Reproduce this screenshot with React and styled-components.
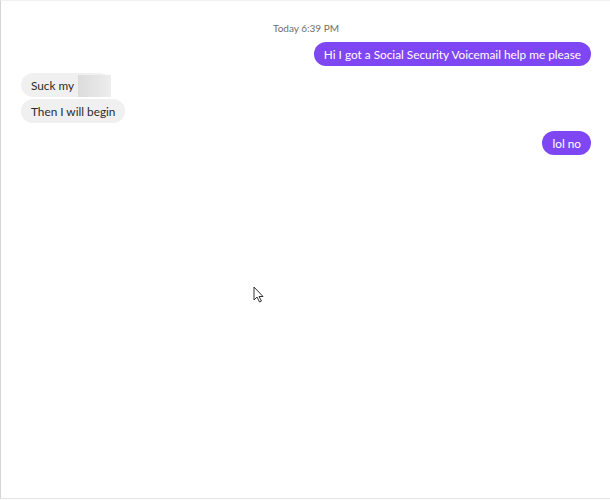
import React from "react";
import styled, { createGlobalStyle } from "styled-components";

const Global = createGlobalStyle`
  html, body { margin: 0; padding: 0; background: #ffffff; }
  body { font-family: Lato, "Open Sans", sans-serif; }
`;

const Frame = styled.div`
  position: relative;
  box-sizing: border-box;
  width: 610px;
  height: 499px;
  border-left: 1px solid #d4d4d4;
  border-top: 1px solid #f1f1f1;
  border-bottom: 1px solid #e4e4e4;
  padding: 18px 19px 0 20px;
  display: flex;
  flex-direction: column;
`;

const Stamp = styled.div`
  text-align: center;
  font-size: 10px;
  color: #6e6e6e;
  line-height: 18px;
  margin-bottom: 5px;
`;

const Row = styled.div`
  display: flex;
  justify-content: ${(p) => (p.$mine ? "flex-end" : "flex-start")};
  margin-top: ${(p) => p.$gap || 0}px;
`;

const Bubble = styled.div`
  display: inline-flex;
  align-items: center;
  height: 24px;
  padding: 0 ${(p) => (p.$pr != null ? p.$pr : 10)}px 0 10px;
  border-radius: 12px;
  font-size: 11.8px;
  white-space: nowrap;
  background: ${(p) => (p.$mine ? "#7f47f4" : "#f0f0f0")};
  color: ${(p) => (p.$mine ? "#ffffff" : "#2b2b2b")};
`;

const Redacted = styled.span`
  display: inline-block;
  width: 33px;
  height: 22px;
  margin-left: 4px;
  align-self: flex-end;
  background: linear-gradient(90deg, #dcdcdc 0%, #e6e6e6 60%, #eeeeee 100%);
`;

const Pointer = styled.svg`
  position: absolute;
  left: 252px;
  top: 285px;
`;

export default function App() {
  return (
    <>
      <Global />
      <Frame>
        <Stamp>Today 6:39 PM</Stamp>
        <Row $mine>
          <Bubble $mine>Hi I got a Social Security Voicemail help me please</Bubble>
        </Row>
        <Row $gap={7}>
          <Bubble $pr={0}>
            Suck my<Redacted />
          </Bubble>
        </Row>
        <Row $gap={2}>
          <Bubble>Then I will begin</Bubble>
        </Row>
        <Row $mine $gap={8}>
          <Bubble $mine>lol no</Bubble>
        </Row>
        <Pointer width="12" height="18" viewBox="0 0 12 18">
          <path
            d="M1 1 L1 14 L4 11 L6.5 16 L8.5 15 L6 10.5 L10 10.5 Z"
            fill="#ffffff"
            stroke="#333333"
            strokeWidth="1"
            strokeLinejoin="round"
          />
        </Pointer>
      </Frame>
    </>
  );
}
